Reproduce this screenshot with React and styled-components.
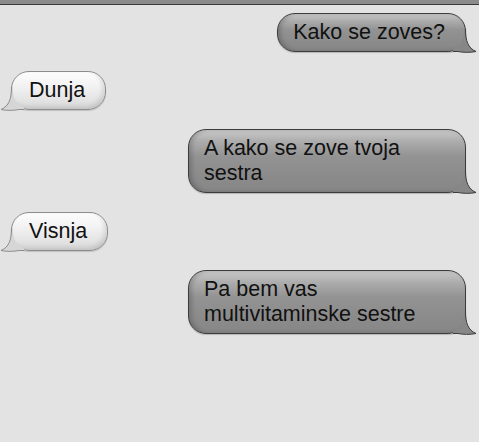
import React from "react";
import styled, { createGlobalStyle } from "styled-components";

const messages = [
  { from: "me", text: "Kako se zoves?" },
  { from: "them", text: "Dunja" },
  { from: "me", text: "A kako se zove tvoja sestra" },
  { from: "them", text: "Visnja" },
  { from: "me", text: "Pa bem vas multivitaminske sestre" },
];

export default function App() {
  return (
    <>
      <GlobalStyle />
      <Screen>
        <TopBar />
        <Thread>
          {messages.map((m, i) => (
            <Bubble key={i} mine={m.from === "me"}>
              {m.text}
              <Tail mine={m.from === "me"} />
            </Bubble>
          ))}
        </Thread>
      </Screen>
    </>
  );
}

// little curled tail on the bottom corner of a bubble
function Tail({ mine }) {
  const fill = mine ? "#878787" : "#d6d6d6";
  const stroke = mine ? "#3c3c3c" : "#8c8c8c";
  return (
    <TailSvg mine={mine} width="24" height="24" viewBox="0 0 24 24">
      <path
        d="M11 0 L12.5 0 C12.5 12 15 19 23 22.5 C17 23.8 10 23.5 5 22.5 L0 22.5 L0 20.2 A16 16 0 0 0 11 5 Z"
        fill={fill}
      />
      <path
        d="M12.5 0 C12.5 12 15 19 23 22.5 C17 23.8 10 23.5 5 22.5 L0 22.5"
        fill="none"
        stroke={stroke}
        strokeWidth="1"
      />
    </TailSvg>
  );
}

const GlobalStyle = createGlobalStyle`
  html, body {
    margin: 0;
    padding: 0;
    background: #e3e3e3;
  }
`;

const Screen = styled.div`
  width: 479px;
  height: 442px;
  background: #e3e3e3;
  font-family: "Liberation Sans", Arial, sans-serif;
  overflow: hidden;
`;

const TopBar = styled.div`
  height: 4px;
  background: #8b8b8b;
  border-bottom: 1px solid #3a3a3a;
`;

const Thread = styled.div`
  display: flex;
  flex-direction: column;
  gap: 19px;
  padding: 8px 13px 0 11px;
`;

const Bubble = styled.div`
  position: relative;
  align-self: ${(p) => (p.mine ? "flex-end" : "flex-start")};
  max-width: 278px;
  box-sizing: border-box;
  padding: ${(p) => (p.mine ? "6px 20px 6px 15px" : "6px 20px 6px 17px")};
  font-size: 21.5px;
  line-height: 25px;
  color: #111;
  border-radius: 18px;
  border: 1px solid ${(p) => (p.mine ? "#3c3c3c" : "#8c8c8c")};
  background: ${(p) =>
    p.mine
      ? "linear-gradient(to bottom, #cacaca 0%, #adadad 18%, #939393 42%, #8b8b8b 75%, #878787 100%)"
      : "linear-gradient(to bottom, #fdfdfd 0%, #f3f3f3 35%, #e6e6e6 70%, #d6d6d6 100%)"};
  box-shadow: ${(p) =>
    p.mine
      ? "inset 3px 0 4px rgba(0,0,0,0.18), 0 1px 1px rgba(0,0,0,0.2)"
      : "inset -3px -2px 4px rgba(0,0,0,0.1), 0 1px 1px rgba(0,0,0,0.15)"};
`;

const TailSvg = styled.svg`
  position: absolute;
  bottom: -2px;
  ${(p) => (p.mine ? "right: -12px;" : "left: -12px; transform: scaleX(-1);")}
`;
